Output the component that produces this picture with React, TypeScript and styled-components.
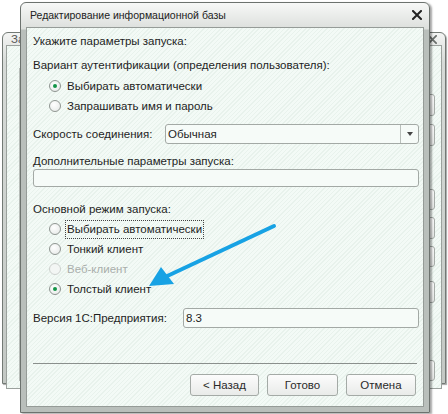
import React from 'react'
import styled, { createGlobalStyle } from 'styled-components'

const GlobalStyle = createGlobalStyle`
  html, body {
    margin: 0;
    padding: 0;
    background: #ffffff;
  }
  body {
    font-family: 'Liberation Sans', Arial, sans-serif;
    color: #1e1e1e;
  }
`

const hatch = `repeating-linear-gradient(135deg, #f3faf6 0px, #f3faf6 2px, #e8f2ec 2px, #e8f2ec 3px)`

const Desktop = styled.div`
  position: relative;
  width: 448px;
  height: 414px;
  overflow: hidden;
  background: #ffffff;
`

/* ---------- background window ---------- */

const BackWindow = styled.div`
  position: absolute;
  left: 2px;
  top: 32px;
  width: 444px;
  height: 352px;
  box-sizing: border-box;
  border: 1px solid #737a75;
  border-radius: 6px 6px 0 0;
  background: linear-gradient(#f4f5f4, #d6dad7 30px, #c3c8c4);
  display: flex;
  flex-direction: column;
  padding: 0 3px 5px 3px;
  box-shadow: 1px 1px 1px rgba(0, 0, 0, 0.35);
`

const BackTitle = styled.div`
  height: 19px;
  display: flex;
  align-items: center;
  justify-content: space-between;
  padding: 0 5px 0 5px;
  font-size: 11.5px;
  color: #555;
`

const BackBody = styled.div`
  flex: 1;
  background: ${hatch};
  border: 1px solid #9ba19d;
  display: flex;
  justify-content: space-between;
  padding: 22px 6px 7px 12px;
`

const BackList = styled.div`
  width: 120px;
  border-left: 1px solid #b8bdb9;
  display: flex;
  flex-direction: column;
`

const BackListMark = styled.div`
  height: 46px;
  border-left: 2px solid #d8d28e;
`

const BackButtons = styled.div`
  width: 76px;
  display: flex;
  flex-direction: column;
`

const BackButton = styled.div<{ $mt: number; $h: number }>`
  margin-top: ${(p) => p.$mt}px;
  height: ${(p) => p.$h}px;
  box-sizing: border-box;
  border: 1px solid #a6aca8;
  border-radius: 3px;
  background: linear-gradient(#fbfbfb, #e6e8e6);
`

/* ---------- front dialog ---------- */

const Dialog = styled.div`
  position: absolute;
  left: 20px;
  top: 2px;
  width: 410px;
  height: 411px;
  box-sizing: border-box;
  border: 1px solid #6c726e;
  border-radius: 6px 6px 0 0;
  background: linear-gradient(#f7f8f7, #dcdfdc 26px, #b9bfbb 27px);
  display: flex;
  flex-direction: column;
  padding: 0 5px 5px 5px;
  box-shadow: 2px 1px 2px rgba(0, 0, 0, 0.35);
`

const TitleBar = styled.div`
  height: 24px;
  display: flex;
  align-items: center;
  justify-content: space-between;
  padding: 0 2px 0 4px;
  font-size: 10.5px;
  color: #222;
`

const Body = styled.div`
  flex: 1;
  background: ${hatch};
  border: 1px solid #959b97;
  display: flex;
  flex-direction: column;
  padding: 3px 4px 10px 6px;
  font-size: 11.5px;
`

const Label = styled.div<{ $mt?: number; $h?: number }>`
  margin-top: ${(p) => p.$mt ?? 0}px;
  height: ${(p) => p.$h ?? 20}px;
  line-height: ${(p) => p.$h ?? 20}px;
  white-space: nowrap;
`

const RadioGroup = styled.div<{ $mt?: number }>`
  margin-top: ${(p) => p.$mt ?? 0}px;
  display: flex;
  flex-direction: column;
  padding-left: 16px;
`

const RadioRow = styled.div<{ $disabled?: boolean }>`
  height: 20px;
  display: flex;
  align-items: center;
  gap: 6px;
  color: ${(p) => (p.$disabled ? '#a9aeab' : '#1e1e1e')};
`

const RadioCircle = styled.span<{ $checked?: boolean; $disabled?: boolean }>`
  width: 12px;
  height: 12px;
  box-sizing: border-box;
  border-radius: 50%;
  border: 1px solid ${(p) => (p.$disabled ? '#cdd1ce' : '#8f9591')};
  background: ${(p) => (p.$disabled ? '#f3f6f4' : 'radial-gradient(circle at 40% 35%, #ffffff, #e4e7e5)')};
  display: flex;
  align-items: center;
  justify-content: center;
  &::after {
    content: '';
    width: 4px;
    height: 4px;
    border-radius: 50%;
    background: ${(p) => (p.$checked ? '#139447' : 'transparent')};
  }
`

const RadioText = styled.span<{ $focused?: boolean }>`
  padding: 0 1px;
  margin-left: -2px;
  line-height: 17px;
  border: 1px dotted ${(p) => (p.$focused ? '#444' : 'transparent')};
`

const FieldRow = styled.div<{ $mt?: number; $labelWidth: number }>`
  margin-top: ${(p) => p.$mt ?? 0}px;
  display: grid;
  grid-template-columns: ${(p) => p.$labelWidth}px 1fr;
  align-items: center;
  white-space: nowrap;
`

const Box = styled.div<{ $h?: number; $mt?: number }>`
  margin-top: ${(p) => p.$mt ?? 0}px;
  height: ${(p) => p.$h ?? 20}px;
  box-sizing: border-box;
  border: 1px solid #a3a9a5;
  border-radius: 3px;
  background: #f6fbf8;
  display: flex;
  align-items: center;
  padding-left: 2px;
`

const SelectValue = styled.span`
  flex: 1;
`

const SelectButton = styled.span`
  width: 17px;
  height: 100%;
  border-left: 1px solid #b9bfbb;
  display: flex;
  align-items: center;
  justify-content: center;
`

const Spacer = styled.div`
  flex: 1;
`

const Separator = styled.div`
  height: 1px;
  background: #8a8f8c;
  margin-right: 2px;
`

const Footer = styled.div`
  margin-top: 10px;
  display: flex;
  justify-content: flex-end;
  gap: 8px;
  padding-right: 3px;
`

const Button = styled.div<{ $w: number }>`
  width: ${(p) => p.$w}px;
  height: 22px;
  box-sizing: border-box;
  border: 1px solid #a4aaa6;
  border-radius: 3px;
  background: linear-gradient(#fcfcfc, #e9ebe9);
  display: flex;
  align-items: center;
  justify-content: center;
  color: #2a2a2a;
`

const Overlay = styled.svg`
  position: absolute;
  left: 0;
  top: 0;
  pointer-events: none;
`

const CloseIcon = ({ color = '#222', size = 10 }: { color?: string; size?: number }) => (
  <svg width={size} height={size} viewBox="0 0 10 10">
    <path d="M1 1 L9 9 M9 1 L1 9" stroke={color} strokeWidth={2} strokeLinecap="square" />
  </svg>
)

const backButtons = [
  { mt: 26, h: 22 },
  { mt: 8, h: 22 },
  { mt: 43, h: 21 },
  { mt: 7, h: 22 },
  { mt: 7, h: 21 },
  { mt: 14, h: 22 },
  { mt: 57, h: 21 },
]

const App = () => {
  return (
    <Desktop>
      <GlobalStyle />
      <BackWindow>
        <BackTitle>
          <span>За</span>
          <CloseIcon color="#6a6f6c" size={9} />
        </BackTitle>
        <BackBody>
          <BackList>
            <BackListMark />
          </BackList>
          <BackButtons>
            {backButtons.map((b, i) => (
              <BackButton key={i} $mt={b.mt} $h={b.h} />
            ))}
          </BackButtons>
        </BackBody>
      </BackWindow>

      <Dialog>
        <TitleBar>
          <span>Редактирование информационной базы</span>
          <CloseIcon />
        </TitleBar>
        <Body>
          <Label>Укажите параметры запуска:</Label>
          <Label $mt={4}>Вариант аутентификации (определения пользователя):</Label>
          <RadioGroup $mt={1}>
            <RadioRow>
              <RadioCircle $checked />
              <RadioText>Выбирать автоматически</RadioText>
            </RadioRow>
            <RadioRow>
              <RadioCircle />
              <RadioText>Запрашивать имя и пароль</RadioText>
            </RadioRow>
          </RadioGroup>

          <FieldRow $mt={8} $labelWidth={132}>
            <span>Скорость соединения:</span>
            <Box>
              <SelectValue>Обычная</SelectValue>
              <SelectButton>
                <svg width="6" height="4" viewBox="0 0 6 4">
                  <path d="M0 0 H6 L3 4 Z" fill="#444" />
                </svg>
              </SelectButton>
            </Box>
          </FieldRow>

          <Label $mt={10} $h={15}>Дополнительные параметры запуска:</Label>
          <Box $h={18} />

          <Label $mt={12}>Основной режим запуска:</Label>
          <RadioGroup>
            <RadioRow>
              <RadioCircle />
              <RadioText $focused>Выбирать автоматически</RadioText>
            </RadioRow>
            <RadioRow>
              <RadioCircle />
              <RadioText>Тонкий клиент</RadioText>
            </RadioRow>
            <RadioRow $disabled>
              <RadioCircle $disabled />
              <RadioText>Веб-клиент</RadioText>
            </RadioRow>
            <RadioRow>
              <RadioCircle $checked />
              <RadioText>Толстый клиент</RadioText>
            </RadioRow>
          </RadioGroup>

          <FieldRow $mt={9} $labelWidth={150}>
            <span>Версия 1С:Предприятия:</span>
            <Box>8.3</Box>
          </FieldRow>

          <Spacer />
          <Separator />
          <Footer>
            <Button $w={69}>&lt; Назад</Button>
            <Button $w={71}>Готово</Button>
            <Button $w={70}>Отмена</Button>
          </Footer>
        </Body>
      </Dialog>

      <Overlay width={448} height={414} viewBox="0 0 448 414">
        <line x1={274} y1={226} x2={163} y2={278} stroke="#17a2e4" strokeWidth={4} strokeLinecap="round" />
        <polygon points="149,286 161,267 174,284" fill="#17a2e4" />
      </Overlay>
    </Desktop>
  )
}

export default App
